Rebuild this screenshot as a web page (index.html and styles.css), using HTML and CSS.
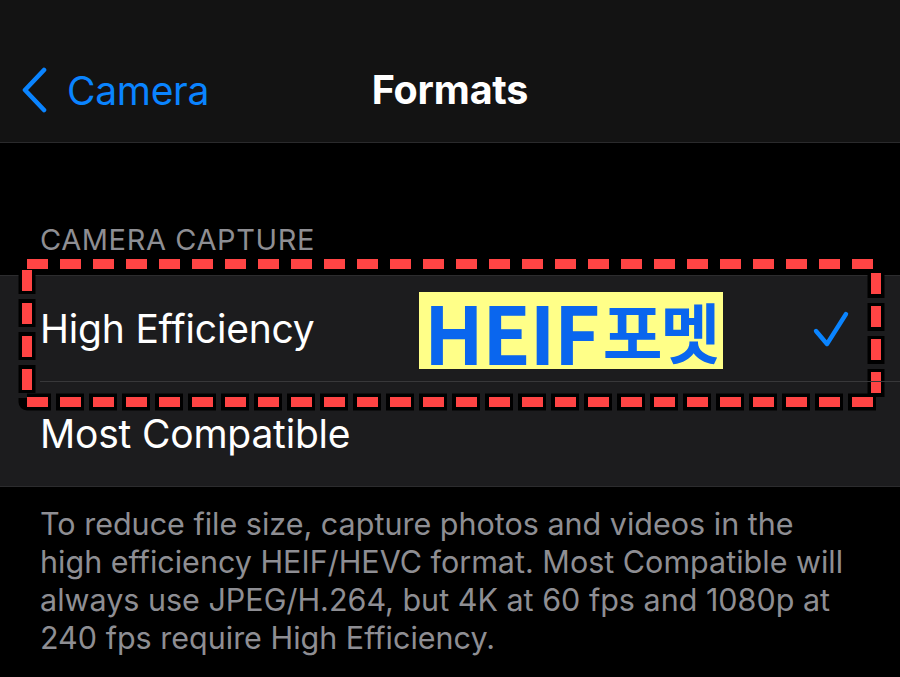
FILE: index.html
```html
<!DOCTYPE html>
<html lang="en">
<head>
<meta charset="utf-8">
<title>Formats</title>
<link rel="stylesheet" href="styles.css">
</head>
<body>
<header class="nav">
  <div class="back">
    <svg class="chev" width="28" height="46" viewBox="0 0 28 46"><path d="M24 3 L5 23 L24 43" fill="none" stroke="#0a84ff" stroke-width="4.6" stroke-linecap="round" stroke-linejoin="round"/></svg>
    <span class="back-label">Camera</span>
  </div>
  <h1 class="title">Formats</h1>
  <div class="spacer"></div>
</header>
<main class="content">
  <div class="section-header">CAMERA CAPTURE</div>
  <div class="group">
    <div class="row row-first">
      <span class="row-label">High Efficiency</span>
      <svg class="check" width="38" height="38" viewBox="0 0 38 38"><path d="M4 21 L15 34 L34 4" fill="none" stroke="#0a84ff" stroke-width="4.4" stroke-linecap="round" stroke-linejoin="round"/></svg>
      <div class="note"><span class="note-latin">HEIF</span><span class="note-ko">포멧</span></div>
      <svg class="frame" width="900" height="180" viewBox="0 0 900 180">
        <rect x="27" y="18" width="849" height="138" fill="none" stroke="#000" stroke-width="17" stroke-dasharray="28 5" stroke-dashoffset="3" stroke-linejoin="round"/>
        <rect x="27" y="18" width="849" height="138" fill="none" stroke="#ff4444" stroke-width="10" stroke-dasharray="21 12"/>
      </svg>
    </div>
    <div class="row">
      <span class="row-label">Most Compatible</span>
    </div>
  </div>
  <p class="footer">To reduce file size, capture photos and videos in the high efficiency HEIF/HEVC format. Most Compatible will always use JPEG/H.264, but 4K at 60 fps and 1080p at 240 fps require High Efficiency.</p>
</main>
</body>
</html>
```
FILE: styles.css
```css
* { box-sizing: border-box; }
html, body { margin: 0; padding: 0; }
body {
  background: #000;
  width: 900px;
  height: 677px;
  overflow: hidden;
  font-family: Inter, "Noto Sans", "Noto Sans CJK KR", sans-serif;
  color: #fff;
}
.nav {
  height: 143px;
  background: #131313;
  border-bottom: 1px solid #2a2a2c;
  padding-top: 38px;
  display: grid;
  grid-template-columns: 1fr auto 1fr;
  align-items: center;
}
.back {
  display: flex;
  align-items: center;
  padding-left: 20px;
  gap: 19px;
  color: #0a84ff;
}
.back-label {
  font-size: 39px;
  letter-spacing: -0.3px;
}
.title {
  margin: 0;
  font-size: 39.5px;
  font-weight: 700;
  letter-spacing: -0.2px;
}
.content { padding-top: 80px; }
.section-header {
  padding-left: 40px;
  font-size: 29px;
  line-height: 34px;
  color: #8e8e93;
  margin-bottom: 18px;
  letter-spacing: 0.6px;
}
.group {
  background: #1c1c1e;
  border-top: 1px solid #2c2c2e;
  border-bottom: 1px solid #2c2c2e;
}
.row {
  height: 105px;
  display: flex;
  align-items: center;
  justify-content: space-between;
  padding-left: 40px;
  padding-right: 50px;
  position: relative;
}
.row-first::after {
  content: "";
  position: absolute;
  left: 40px;
  right: 0;
  bottom: -1px;
  height: 1px;
  background: #38383a;
}
.row-label {
  font-size: 39px;
  letter-spacing: -0.2px;
}
.check { display: block; }
.note {
  position: absolute;
  left: 419px;
  top: 16px;
  width: 304px;
  height: 77px;
  background: #ffff88;
  color: #0a66ee;
  font-family: "Noto Sans CJK KR", sans-serif;
  font-weight: 700;
  line-height: 77px;
  padding-left: 5px;
  white-space: nowrap;
  display: flex;
  align-items: center;
}
.note-latin {
  font-size: 79px;
  letter-spacing: -1.5px;
}
.note-ko {
  font-size: 65px;
  letter-spacing: -2px;
  margin-left: 4px;
}
.frame {
  position: absolute;
  left: 0;
  top: -30px;
  pointer-events: none;
}
.footer {
  margin: 0;
  padding: 18px 48px 0 40px;
  font-size: 30.5px;
  line-height: 38px;
  color: #8e8e93;
}
```
